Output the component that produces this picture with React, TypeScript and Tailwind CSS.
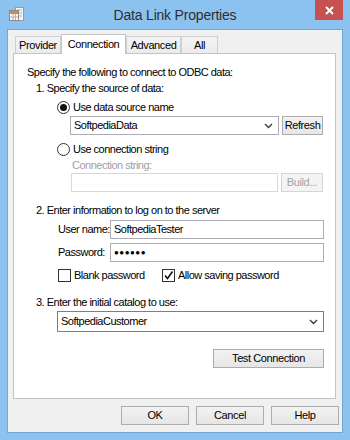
import React from "react";

const F = { fontFamily: '"Liberation Sans", Arial, sans-serif' };

function Btn({ children, w, disabled }: { children: React.ReactNode; w: string; disabled?: boolean }) {
  return (
    <div
      className={`${w} h-[19px] flex items-center justify-center border text-[11px] tracking-[-0.4px] leading-none ${
        disabled
          ? "border-[#d5d5d5] bg-[#f4f4f4] text-[#a3a3a3]"
          : "border-[#acacac] bg-gradient-to-b from-[#f2f2f2] to-[#e6e6e6] text-black"
      }`}
    >
      {children}
    </div>
  );
}

function Chevron() {
  return (
    <svg width="9" height="6" viewBox="0 0 9 6" className="shrink-0">
      <polyline points="1,1 4.5,4.5 8,1" fill="none" stroke="#3c3c3c" strokeWidth="1.4" />
    </svg>
  );
}

function Radio({ checked }: { checked?: boolean }) {
  return (
    <div className="w-[13px] h-[13px] rounded-full border border-[#333] bg-white flex items-center justify-center shrink-0">
      {checked && <div className="w-[7px] h-[7px] rounded-full bg-[#111]" />}
    </div>
  );
}

function Check({ checked }: { checked?: boolean }) {
  return (
    <div className="w-[13px] h-[13px] border border-[#333] bg-white flex items-center justify-center shrink-0">
      {checked && (
        <svg width="11" height="11" viewBox="0 0 11 11">
          <polyline points="2,5.5 4.5,8.5 9.5,1.5" fill="none" stroke="#111" strokeWidth="1.6" />
        </svg>
      )}
    </div>
  );
}

function Tab({ label, w, selected }: { label: string; w: string; selected?: boolean }) {
  return (
    <div
      className={`${w} ${
        selected
          ? "h-[20px] bg-white border-l border-t border-r border-[#c4c4c4] -mb-px z-10 relative"
          : "h-[17px] bg-gradient-to-b from-[#f3f3f3] to-[#ebebeb] border-l border-t border-r border-[#d0d0d0]"
      } flex items-center justify-center text-[11px] tracking-[-0.4px] leading-none text-black`}
    >
      {label}
    </div>
  );
}

export default function App() {
  return (
    <div className="w-[350px] h-[440px] bg-[#8cc2f0] flex flex-col" style={F}>
      {/* Title bar */}
      <div className="h-[29px] grid grid-cols-[1fr_auto_1fr] items-start">
        <div className="pl-[9px] pt-[7px]">
          <svg width="15" height="15" viewBox="0 0 15 15">
            <rect x="6.5" y="0.5" width="8" height="13" fill="#f4f4f4" stroke="#9a9a9a" />
            <line x1="8" y1="3" x2="13" y2="3" stroke="#b5b5b5" />
            <line x1="8" y1="6" x2="13" y2="6" stroke="#b5b5b5" />
            <line x1="8" y1="9" x2="13" y2="9" stroke="#b5b5b5" />
            <rect x="0.5" y="3.5" width="9" height="10" fill="#fbfbfb" stroke="#8a8a8a" />
            <rect x="1" y="4" width="8" height="3" fill="#e8852e" />
            <line x1="1" y1="10" x2="9" y2="10" stroke="#b0b0b0" />
            <line x1="4" y1="7" x2="4" y2="13" stroke="#b0b0b0" />
            <line x1="6.5" y1="7" x2="6.5" y2="13" stroke="#b0b0b0" />
          </svg>
        </div>
        <div className="pt-[5px] text-[14px] tracking-[-0.2px] text-[#2f2f2f] leading-[20px]">
          Data Link Properties
        </div>
        <div className="flex justify-end pr-[7px]">
          <div className="w-[28px] h-[20px] bg-[#c75050] flex items-center justify-center">
            <svg width="9" height="9" viewBox="0 0 9 9">
              <path d="M1 1 L8 8 M8 1 L1 8" stroke="#fff" strokeWidth="2" />
            </svg>
          </div>
        </div>
      </div>

      {/* Client area */}
      <div className="ml-[7px] w-[336px] h-[404px] border border-[#77a4d0] bg-[#f0f0f0] flex flex-col pl-[5px] pr-[3px] pt-[4px]">
        {/* Tabs */}
        <div className="flex items-end h-[19px] pl-[2px]">
          <Tab label="Provider" w="w-[46px]" />
          <Tab label="Connection" w="w-[65px]" selected />
          <Tab label="Advanced" w="w-[55px]" />
          <Tab label="All" w="w-[37px]" />
        </div>

        {/* Panel */}
        <div className="w-[323px] h-[346px] border border-[#c4c4c4] bg-white flex flex-col text-[11px] tracking-[-0.5px] text-black">
          <div className="h-[16px] leading-[16px] mt-[10px] pl-[13px]">
            Specify the following to connect to ODBC data:
          </div>
          <div className="h-[16px] leading-[16px] pl-[22px]">1. Specify the source of data:</div>
          <div className="h-[16px] mt-[3px] pl-[43px] flex items-center gap-[3px]">
            <Radio checked />
            <span className="leading-[16px]">Use data source name</span>
          </div>
          <div className="h-[19px] mt-[1px] pl-[56px] flex gap-[3px]">
            <div className="w-[209px] h-[19px] border border-[#abadb3] bg-white flex items-center pl-[3px] pr-[5px]">
              <span className="flex-1">SoftpediaData</span>
              <Chevron />
            </div>
            <Btn w="w-[41px]">Refresh</Btn>
          </div>
          <div className="h-[16px] mt-[6px] pl-[43px] flex items-center gap-[3px]">
            <Radio />
            <span className="leading-[16px]">Use connection string</span>
          </div>
          <div className="h-[16px] leading-[16px] pl-[58px] text-[#a0a0a0]">Connection string:</div>
          <div className="h-[19px] pl-[57px] flex gap-[3px]">
            <div className="w-[207px] h-[19px] border border-[#d9d9d9] bg-white" />
            <Btn w="w-[42px]" disabled>
              Build...
            </Btn>
          </div>
          <div className="h-[16px] leading-[16px] mt-[10px] pl-[22px]">
            2. Enter information to log on to the server
          </div>
          <div className="h-[19px] mt-[2px] pl-[44px] flex items-center">
            <span className="w-[52px]">User name:</span>
            <div className="w-[214px] h-[19px] border border-[#abadb3] bg-white flex items-center pl-[3px]">
              SoftpediaTester
            </div>
          </div>
          <div className="h-[19px] mt-[4px] pl-[44px] flex items-center">
            <span className="w-[52px]">Password:</span>
            <div className="w-[214px] h-[19px] border border-[#abadb3] bg-white flex items-center pl-[3px] text-[8px] tracking-[0.5px]">
              ●●●●●●
            </div>
          </div>
          <div className="h-[16px] mt-[5px] pl-[44px] flex items-center">
            <div className="w-[104px] flex items-center gap-[3px]">
              <Check />
              <span>Blank password</span>
            </div>
            <div className="flex items-center gap-[3px]">
              <Check checked />
              <span>Allow saving password</span>
            </div>
          </div>
          <div className="h-[16px] leading-[16px] mt-[11px] pl-[22px]">3. Enter the initial catalog to use:</div>
          <div className="h-[21px] mt-[1px] pl-[43px] flex">
            <div className="w-[267px] h-[21px] border border-[#3c8fe0] bg-white flex items-center pl-[3px] pr-[5px]">
              <span className="flex-1">SoftpediaCustomer</span>
              <Chevron />
            </div>
          </div>
          <div className="mt-[17px] pl-[199px] flex">
            <Btn w="w-[111px]">Test Connection</Btn>
          </div>
        </div>

        {/* Bottom buttons */}
        <div className="mt-[7px] flex justify-end gap-[7px]">
          <Btn w="w-[68px]">OK</Btn>
          <Btn w="w-[68px]">Cancel</Btn>
          <Btn w="w-[68px]">Help</Btn>
        </div>
      </div>
    </div>
  );
}
